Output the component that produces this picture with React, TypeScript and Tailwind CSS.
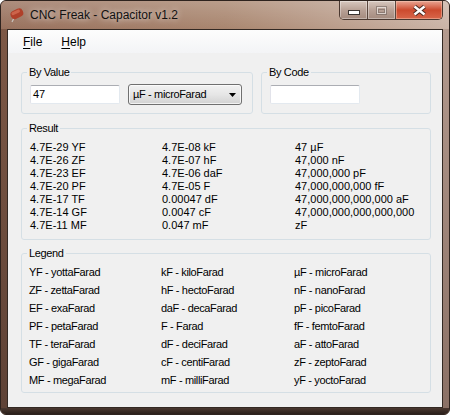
import React from "react";

const results: [string, string, string][] = [
  ["4.7E-29 YF", "4.7E-08 kF", "47 µF"],
  ["4.7E-26 ZF", "4.7E-07 hF", "47,000 nF"],
  ["4.7E-23 EF", "4.7E-06 daF", "47,000,000 pF"],
  ["4.7E-20 PF", "4.7E-05 F", "47,000,000,000 fF"],
  ["4.7E-17 TF", "0.00047 dF", "47,000,000,000,000 aF"],
  ["4.7E-14 GF", "0.0047 cF", "47,000,000,000,000,000"],
  ["4.7E-11 MF", "0.047 mF", "zF"],
];

const legend: [string, string, string][] = [
  ["YF - yottaFarad", "kF - kiloFarad", "µF - microFarad"],
  ["ZF - zettaFarad", "hF - hectoFarad", "nF - nanoFarad"],
  ["EF - exaFarad", "daF - decaFarad", "pF - picoFarad"],
  ["PF - petaFarad", "F - Farad", "fF - femtoFarad"],
  ["TF - teraFarad", "dF - deciFarad", "aF - attoFarad"],
  ["GF - gigaFarad", "cF - centiFarad", "zF - zeptoFarad"],
  ["MF - megaFarad", "mF - milliFarad", "yF - yoctoFarad"],
];

const AppIcon = () => (
  <svg width="16" height="16" viewBox="0 0 16 16">
    <line x1="5" y1="11" x2="3" y2="15" stroke="#c9c1bb" strokeWidth="1.2" />
    <g transform="rotate(-25 8 7)">
      <rect x="1.5" y="2.5" width="13" height="8.5" rx="4" fill="#b0402a" />
      <rect x="3" y="3.5" width="9" height="3" rx="1.5" fill="#d8735a" opacity="0.7" />
    </g>
  </svg>
);

const GroupBox = ({
  title,
  className,
  children,
}: {
  title: string;
  className?: string;
  children: React.ReactNode;
}) => (
  <fieldset className={"border border-[#d5dfe5] rounded-[3px] pl-[5px] pr-[5px] " + (className || "")}>
    <legend className="px-[2px] text-[11px] leading-[13px] tracking-[-0.35px] text-black">{title}</legend>
    {children}
  </fieldset>
);

const TextBox = ({ value }: { value?: string }) => (
  <div className="w-[90px] h-[19px] bg-white border border-[#e3e9ef] border-t-[#abadb3] border-l-[#e2e3ea] rounded-[2px] flex items-center pl-[2px] text-[11px] text-black">
    {value}
  </div>
);

export default function App() {
  return (
    <div
      className="w-[450px] h-[415px] flex flex-col overflow-hidden rounded-[6px] border border-[#2e231e] bg-[#7a5646]"
      style={{ fontFamily: '"Liberation Sans", Arial, sans-serif' }}
    >
      {/* title bar */}
      <div className="h-[28px] flex bg-linear-to-r from-[#98715d] via-[#a9866f] to-[#cbb4a7] relative">
        <div className="absolute inset-0 bg-linear-to-b from-white/20 to-transparent" />
        <div className="relative flex items-center flex-1 pl-[8px] gap-[5px]">
          <AppIcon />
          <span className="text-[12px] text-[#111] [text-shadow:0_0_6px_rgba(255,255,255,0.9)]">
            CNC Freak - Capacitor v1.2
          </span>
        </div>
        <div className="relative self-start flex h-[19px] mr-[6px] border border-t-0 border-[#4a3830] rounded-b-[5px] overflow-hidden">
          <div className="w-[28px] flex items-center justify-center bg-linear-to-b from-[#d8c8bf] via-[#b8a196] to-[#a48a7e] border-r border-[#5a463d] shadow-[inset_0_0_0_1px_rgba(255,255,255,0.35)]">
            <svg width="12" height="5" viewBox="0 0 12 5" className="mt-[5px]">
              <rect x="0.5" y="0.5" width="11" height="4" fill="#fff" stroke="#3b3532" />
            </svg>
          </div>
          <div className="w-[28px] flex items-center justify-center bg-linear-to-b from-[#d8c8bf] via-[#b8a196] to-[#a48a7e] border-r border-[#5a463d] shadow-[inset_0_0_0_1px_rgba(255,255,255,0.35)]">
            <svg width="11" height="9" viewBox="0 0 11 9" opacity="0.55">
              <rect x="0.5" y="0.5" width="10" height="8" fill="none" stroke="#6d625c" />
              <rect x="1.5" y="1.5" width="8" height="6" fill="none" stroke="#fff" />
              <rect x="2.5" y="3.5" width="6" height="3" fill="none" stroke="#6d625c" />
            </svg>
          </div>
          <div className="w-[46px] flex items-center justify-center bg-linear-to-b from-[#e8a593] via-[#cc4a2e] to-[#d8664a] shadow-[inset_0_0_0_1px_rgba(255,220,200,0.4)]">
            <svg width="15" height="11" viewBox="0 0 15 11">
              <path d="M2.5 1.5 L12.5 9.5 M12.5 1.5 L2.5 9.5" stroke="#4a2a22" strokeWidth="4.4" />
              <path d="M2.5 1.5 L12.5 9.5 M12.5 1.5 L2.5 9.5" stroke="#fff" strokeWidth="2.4" />
            </svg>
          </div>
        </div>
      </div>

      <div className="flex flex-1">
        {/* left frame */}
        <div className="w-[6px] bg-linear-to-b from-[#7d5846] to-[#5e4236]" />

        {/* client area */}
        <div className="flex-1 flex flex-col bg-[#f0f0f0] border border-[#332923]">
          {/* menu bar */}
          <div className="h-[23px] flex items-center pl-[15px] gap-[19px] text-[12px] text-black bg-linear-to-b from-[#fdfdfd] to-[#f3f4f6]">
            <span>
              <span className="underline underline-offset-[2px]">F</span>ile
            </span>
            <span>
              <span className="underline underline-offset-[2px]">H</span>elp
            </span>
          </div>

          <div className="flex flex-col pl-[13px] pr-[11px]">
            {/* input row */}
            <div className="flex gap-[8px] mt-[13px]">
              <GroupBox title="By Value" className="w-[232px]">
                <div className="flex items-center gap-[8px] pl-[3px] pt-[5px] pb-[8px]">
                  <TextBox value="47" />
                  <div className="w-[114px] h-[21px] flex items-center justify-between pl-[4px] pr-[5px] rounded-[3px] border border-[#707070] bg-linear-to-b from-[#f2f2f2] via-[#e6e6e6] to-[#d2d2d2] shadow-[inset_0_0_0_1px_rgba(255,255,255,0.7)] text-[11px] tracking-[-0.35px] text-black">
                    <span>µF - microFarad</span>
                    <svg width="7" height="4" viewBox="0 0 7 4">
                      <path d="M0 0 H7 L3.5 4 Z" fill="#000" />
                    </svg>
                  </div>
                </div>
              </GroupBox>
              <GroupBox title="By Code" className="w-[170px]">
                <div className="flex items-center pl-[3px] pt-[5px] pb-[8px] h-[34px]">
                  <TextBox />
                </div>
              </GroupBox>
            </div>

            {/* converted values */}
            <GroupBox title="Result" className="mt-[8px]">
              <div className="grid grid-cols-[132px_133px_1fr] pl-[3px] pt-[6px] pb-[7px] text-[11px] leading-[13px] text-black">
                {results.map((row, i) => (
                  <React.Fragment key={i}>
                    <span>{row[0]}</span>
                    <span>{row[1]}</span>
                    <span>{row[2]}</span>
                  </React.Fragment>
                ))}
              </div>
            </GroupBox>

            {/* unit legend */}
            <GroupBox title="Legend" className="mt-[7px]">
              <div className="grid grid-cols-[132px_133px_1fr] pl-[2px] pt-[3px] pb-[3px] text-[11px] leading-[18px] tracking-[-0.35px] text-black">
                {legend.map((row, i) => (
                  <React.Fragment key={i}>
                    <span>{row[0]}</span>
                    <span>{row[1]}</span>
                    <span>{row[2]}</span>
                  </React.Fragment>
                ))}
              </div>
            </GroupBox>
          </div>
        </div>

        {/* right frame */}
        <div className="w-[6px] bg-linear-to-b from-[#b39a8e] to-[#8b7166]" />
      </div>

      {/* bottom frame */}
      <div className="h-[6px] bg-linear-to-b from-[#4a3830] to-[#2a1f1a]" />
    </div>
  );
}
